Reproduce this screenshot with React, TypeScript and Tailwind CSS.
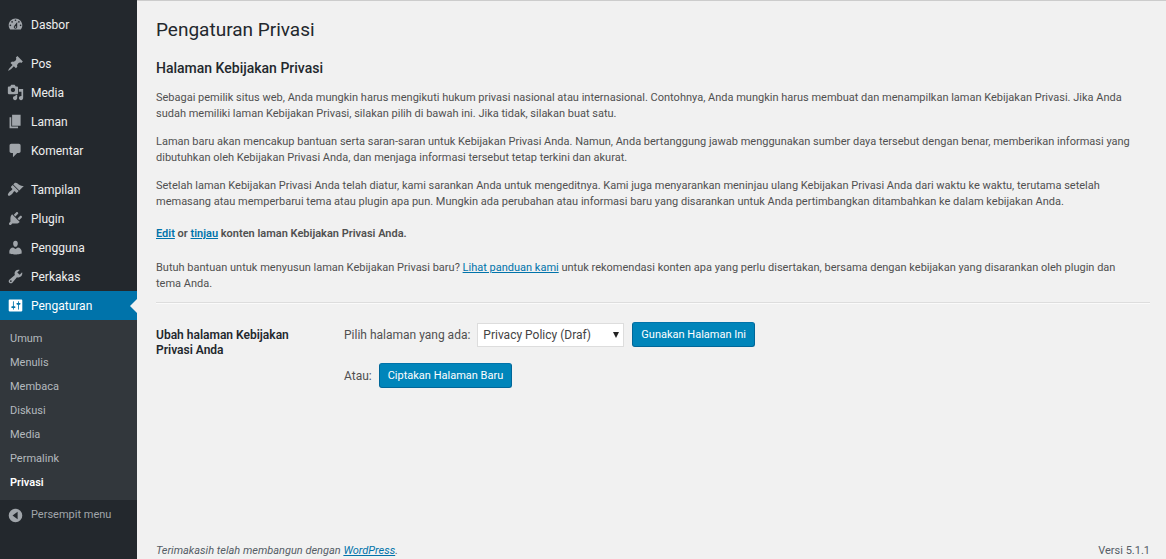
type MenuEntry = { label: string; path: string; active?: boolean };

const icons = {
  dashboard:
    'M3.76 16h12.48c1.1-1.37 1.76-3.11 1.76-5 0-4.42-3.58-8-8-8s-8 3.58-8 8c0 1.89.66 3.63 1.76 5zM10 4c.55 0 1 .45 1 1s-.45 1-1 1-1-.45-1-1 .45-1 1-1zM6 6c.55 0 1 .45 1 1s-.45 1-1 1-1-.45-1-1 .45-1 1-1zm8 0c.55 0 1 .45 1 1s-.45 1-1 1-1-.45-1-1 .45-1 1-1zm-5.37 5.55L12 7v6c0 1.1-.9 2-2 2s-2-.9-2-2c0-.57.24-1.08.63-1.45zM4 10c.55 0 1 .45 1 1s-.45 1-1 1-1-.45-1-1 .45-1 1-1zm12 0c.55 0 1 .45 1 1s-.45 1-1 1-1-.45-1-1 .45-1 1-1zm-5 3c0-.55-.45-1-1-1s-1 .45-1 1 .45 1 1 1 1-.45 1-1z',
  post: 'M10.44 3.02l1.82-1.82 6.36 6.35-1.83 1.82c-1.05-.68-2.48-.57-3.41.36l-.75.75c-.92.93-1.04 2.35-.35 3.41l-1.83 1.82-2.41-2.41-2.8 2.79c-.42.42-3.38 2.71-3.8 2.29s1.86-3.39 2.28-3.81l2.79-2.79L4.1 9.36l1.83-1.82c1.05.69 2.48.57 3.4-.36l.75-.75c.93-.92 1.05-2.35.36-3.41z',
  media:
    'M13 11V4c0-.55-.45-1-1-1h-1.67L9 1H5L3.67 3H2c-.55 0-1 .45-1 1v7c0 .55.45 1 1 1h10c.55 0 1-.45 1-1zM7 4.5c1.38 0 2.5 1.12 2.5 2.5S8.38 9.5 7 9.5 4.5 8.38 4.5 7 5.62 4.5 7 4.5zM14 6h5v10.5c0 1.38-1.12 2.5-2.5 2.5S14 17.88 14 16.5s1.12-2.5 2.5-2.5c.17 0 .34.02.5.05V9h-3V6zm-4 8.05V13h2v3.5c0 1.38-1.12 2.5-2.5 2.5S7 17.88 7 16.5 8.12 14 9.5 14c.17 0 .34.02.5.05z',
  page: 'M6 15V2h10v13H6zm-1 1h8v2H3V5h2v11z',
  comments: 'M5 2h9c1.1 0 2 .9 2 2v7c0 1.1-.9 2-2 2h-2l-5 5v-5H5c-1.1 0-2-.9-2-2V4c0-1.1.9-2 2-2z',
  appearance:
    'M14.48 11.06L7.41 3.99l1.5-1.5c.5-.56 2.3-.47 3.51.32 1.21.8 1.43 1.28 2.91 2.1 1.18.64 2.45 1.26 4.45.85zm-.71.71L6.7 4.7 4.93 6.47c-.39.39-.39 1.02 0 1.41l1.06 1.06c.39.39.39 1.03 0 1.42-.6.6-1.43 1.11-2.21 1.69-.35.26-.7.53-1.01.84C1.43 14.23.4 16.08 1.4 17.07c.99 1 2.84-.03 4.18-1.36.31-.31.58-.66.85-1.02.57-.78 1.08-1.61 1.69-2.21.39-.39 1.02-.39 1.41 0l1.06 1.06c.39.39 1.02.39 1.41 0z',
  plugins:
    'M13.11 4.36L9.87 7.6 8 5.73l3.24-3.24c.35-.34 1.05-.2 1.56.32.52.51.66 1.21.31 1.55zm-8 1.77l.91-1.12 9.01 9.01-1.19.84c-.71.71-2.63 1.16-3.82 1.16H6.14L4.9 17.26c-.59.59-1.54.59-2.12 0-.59-.58-.59-1.53 0-2.12l1.24-1.24v-3.88c0-1.13.4-3.19 1.09-3.89zm7.26 3.97l3.24-3.24c.34-.35 1.04-.21 1.55.31.52.51.66 1.21.31 1.55l-3.24 3.25z',
  users:
    'M10 9.25c-2.27 0-2.73-3.44-2.73-3.44C7 4.02 7.82 2 9.97 2c2.16 0 2.98 2.02 2.71 3.81 0 0-.41 3.44-2.68 3.44zm0 2.57L12.72 10c2.39 0 4.52 2.33 4.52 4.53v2.49s-3.65 1.13-7.24 1.13c-3.65 0-7.24-1.13-7.24-1.13v-2.49c0-2.25 1.94-4.48 4.47-4.48z',
  tools:
    'M16.68 9.77c-1.34 1.34-3.3 1.67-4.95.99l-5.41 6.52c-.99.99-2.59.99-3.58 0s-.99-2.59 0-3.57l6.52-5.42c-.68-1.65-.35-3.61.99-4.95 1.28-1.28 3.12-1.62 4.72-1.06l-2.89 2.89 2.82 2.82 2.86-2.87c.53 1.58.18 3.39-1.08 4.65zM3.81 16.21c.4.39 1.04.39 1.43 0 .4-.4.4-1.04 0-1.43-.39-.4-1.03-.4-1.43 0-.39.39-.39 1.03 0 1.43z',
  settings:
    'M18 16V4c0-.55-.45-1-1-1H3c-.55 0-1 .45-1 1v12c0 .55.45 1 1 1h14c.55 0 1-.45 1-1zM8 11h1c.55 0 1 .45 1 1s-.45 1-1 1H8v1.5c0 .28-.22.5-.5.5s-.5-.22-.5-.5V13H6c-.55 0-1-.45-1-1s.45-1 1-1h1V5.5c0-.28.22-.5.5-.5s.5.22.5.5V11zm5-2h-1c-.55 0-1-.45-1-1s.45-1 1-1h1V5.5c0-.28.22-.5.5-.5s.5.22.5.5V7h1c.55 0 1 .45 1 1s-.45 1-1 1h-1v5.5c0 .28-.22.5-.5.5s-.5-.22-.5-.5V9z',
  collapse: 'M10 2a8 8 0 1 0 0 16 8 8 0 0 0 0-16zM12.5 5.5v9L6.5 10z',
};

const groups: MenuEntry[][] = [
  [{ label: 'Dasbor', path: icons.dashboard }],
  [
    { label: 'Pos', path: icons.post },
    { label: 'Media', path: icons.media },
    { label: 'Laman', path: icons.page },
    { label: 'Komentar', path: icons.comments },
  ],
  [
    { label: 'Tampilan', path: icons.appearance },
    { label: 'Plugin', path: icons.plugins },
    { label: 'Pengguna', path: icons.users },
    { label: 'Perkakas', path: icons.tools },
    { label: 'Pengaturan', path: icons.settings, active: true },
  ],
];

const submenu = ['Umum', 'Menulis', 'Membaca', 'Diskusi', 'Media', 'Permalink', 'Privasi'];

function Icon({ path, className }: { path: string; className: string }) {
  return (
    <svg viewBox="0 0 20 20" className={`w-[17px] h-[17px] shrink-0 ${className}`} fill="currentColor" fillRule="evenodd" aria-hidden="true">
      <path d={path} />
    </svg>
  );
}

function MenuItem({ label, path, active }: MenuEntry) {
  return (
    <li>
      <a
        href="#"
        className={`relative flex items-center gap-[7px] h-[29px] pl-[7px] ${active ? 'bg-[#0073aa] text-white' : 'text-[#eeeeee] hover:text-[#00b9eb]'}`}
      >
        <Icon path={path} className={active ? 'text-white' : 'text-[#a0a5aa]'} />
        {label}
        {active && <span className="absolute right-0 top-2 border-y-7 border-r-7 border-y-transparent border-r-[#f1f1f1]" />}
      </a>
    </li>
  );
}

function Sidebar() {
  return (
    <nav className="w-[137px] shrink-0 bg-[#23282d] pt-[10px] text-[12px]">
      <div className="flex flex-col gap-[10px]">
        {groups.map((group, i) => (
          <ul key={i}>
            {group.map((item) => (
              <MenuItem key={item.label} {...item} />
            ))}
          </ul>
        ))}
      </div>
      <ul className="bg-[#32373c] pt-[7px] pb-[5px] text-[11px]">
        {submenu.map((label) => (
          <li key={label}>
            <a href="#" className={`flex items-center h-6 pl-[10px] ${label === 'Privasi' ? 'font-semibold text-white' : 'text-[#b4b9be]'}`}>
              {label}
            </a>
          </li>
        ))}
      </ul>
      <button type="button" className="flex items-center gap-[7px] h-[31px] w-full pl-[7px] text-[11px] text-[#a0a5aa]">
        <Icon path={icons.collapse} className="text-[#a0a5aa]" />
        Persempit menu
      </button>
    </nav>
  );
}

function PrimaryButton({ children }: { children: string }) {
  return (
    <button
      type="button"
      className="h-[25px] px-2 rounded-[3px] border border-[#006799] border-t-[#0073aa] bg-[#0085ba] text-[11px] text-white"
    >
      {children}
    </button>
  );
}

export default function App() {
  return (
    <div className="flex min-h-screen bg-[#f1f1f1] font-[Roboto,'Open_Sans',sans-serif] text-[#505050]">
      <Sidebar />
      <div className="flex flex-col flex-1 min-w-0 border-t border-[#cccccc] pl-[19px] pr-4">
        <main className="text-[11px] leading-4">
          <h1 className="pt-[15px] text-[19px] leading-7 text-[#23282d]">Pengaturan Privasi</h1>
          <h2 className="mt-4 text-[14px] leading-4 font-medium text-[#23282d]">Halaman Kebijakan Privasi</h2>
          <div className="pr-3">
            <p className="mt-[14px]">
              Sebagai pemilik situs web, Anda mungkin harus mengikuti hukum privasi nasional atau internasional. Contohnya, Anda mungkin harus membuat dan menampilkan laman Kebijakan Privasi. Jika Anda
              sudah memiliki laman Kebijakan Privasi, silakan pilih di bawah ini. Jika tidak, silakan buat satu.
            </p>
            <p className="mt-3">
              Laman baru akan mencakup bantuan serta saran-saran untuk Kebijakan Privasi Anda. Namun, Anda bertanggung jawab menggunakan sumber daya tersebut dengan benar, memberikan informasi yang
              dibutuhkan oleh Kebijakan Privasi Anda, dan menjaga informasi tersebut tetap terkini dan akurat.
            </p>
            <p className="mt-3">
              Setelah laman Kebijakan Privasi Anda telah diatur, kami sarankan Anda untuk mengeditnya. Kami juga menyarankan meninjau ulang Kebijakan Privasi Anda dari waktu ke waktu, terutama setelah
              memasang atau memperbarui tema atau plugin apa pun. Mungkin ada perubahan atau informasi baru yang disarankan untuk Anda pertimbangkan ditambahkan ke dalam kebijakan Anda.
            </p>
            <p className="mt-4 font-semibold">
              <a href="#" className="text-[#0073aa] underline">Edit</a> or{' '}
              <a href="#" className="text-[#0073aa] underline">tinjau</a> konten laman Kebijakan Privasi Anda.
            </p>
            <p className="mt-[18px]">
              Butuh bantuan untuk menyusun laman Kebijakan Privasi baru?{' '}
              <a href="#" className="text-[#0073aa] underline">Lihat panduan kami</a> untuk rekomendasi konten apa yang perlu disertakan, bersama dengan kebijakan yang disarankan oleh plugin dan
              tema Anda.
            </p>
          </div>
          <hr className="mt-[10px] border-t border-[#dddddd] border-b border-b-[#fafafa]" />

          <form className="flex pt-[18px] text-[12px]" onSubmit={(e) => e.preventDefault()}>
            <h3 className="w-[188px] shrink-0 pr-9 pt-[6px] leading-[15px] font-semibold text-[#23282d]">Ubah halaman Kebijakan Privasi Anda</h3>
            <div className="flex flex-col gap-4">
              <div className="flex items-center">
                <label htmlFor="page-for-privacy" className="mr-[7px]">Pilih halaman yang ada:</label>
                <div className="relative mr-2">
                  <select
                    id="page-for-privacy"
                    className="appearance-none block w-[147px] h-6 pl-[5px] border border-[#dddddd] bg-white text-[12px] text-[#444444]"
                  >
                    <option>Privacy Policy (Draf)</option>
                  </select>
                  <svg viewBox="0 0 6 6" className="absolute right-[5px] top-[9px] w-[6px] h-[6px] pointer-events-none" fill="#222222" aria-hidden="true">
                    <path d="M0 0h6L3 6z" />
                  </svg>
                </div>
                <PrimaryButton>Gunakan Halaman Ini</PrimaryButton>
              </div>
              <div className="flex items-center gap-[7px]">
                <span>Atau:</span>
                <PrimaryButton>Ciptakan Halaman Baru</PrimaryButton>
              </div>
            </div>
          </form>
        </main>
        <footer className="mt-auto flex justify-between text-[11px] leading-4 text-[#555d66]">
          <p className="italic">
            Terimakasih telah membangun dengan <a href="#" className="text-[#0073aa] underline">WordPress</a>.
          </p>
          <p>Versi 5.1.1</p>
        </footer>
      </div>
    </div>
  );
}
